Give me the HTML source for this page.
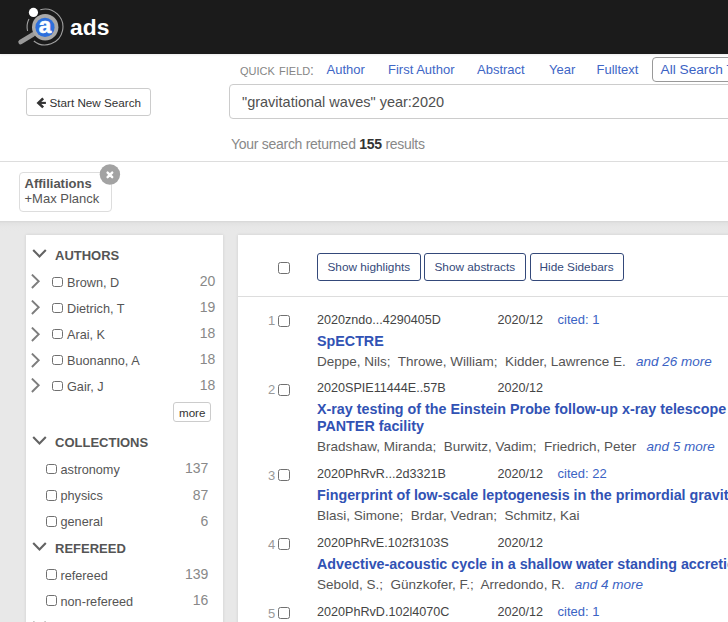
<!DOCTYPE html>
<html><head><meta charset="utf-8">
<style>
html,body{margin:0;padding:0;}
body{width:728px;height:622px;overflow:hidden;position:relative;background:#fff;font-family:"Liberation Sans",sans-serif;}
.t{position:absolute;white-space:nowrap;line-height:1;}
#hdr{position:absolute;left:0;top:0;width:728px;height:54px;background:#1b1b1b;box-shadow:0 1px 2px rgba(0,0,0,0.08);}
.qf{font-size:13px;color:#4066c6;}
#gray{position:absolute;left:0;top:221px;width:728px;height:401px;background:linear-gradient(#d6d6d6 0px,#e2e2e2 2px,#e7e7e7 6px,#e8e8e8 10px);}
.panel{position:absolute;background:#fff;box-shadow:0 0 3px rgba(0,0,0,0.12);}
.cb{position:absolute;box-sizing:border-box;border:1px solid #707070;border-radius:2.5px;background:#fff;}
.fh{font-size:13px;font-weight:bold;color:#555;}
.fi{font-size:12.7px;color:#555;}
.fc{font-size:14px;color:#888;text-align:right;}
.bib{font-size:12.6px;color:#444;}
.ttl{font-size:14.3px;font-weight:bold;color:#3152b4;}
.au{font-size:13.5px;color:#555;}
.more{font-size:13.5px;font-style:italic;color:#3b63c4;margin-left:2.5px;}
.cit{font-size:13px;color:#3b63c4;}
.num{font-size:13px;color:#999;}
.btn{position:absolute;box-sizing:border-box;border:1px solid #34497a;border-radius:3px;background:#fff;color:#34497a;font-size:12px;line-height:1;}
</style></head><body>
<div id="hdr">
  <svg width="64" height="53" style="position:absolute;left:0;top:0" viewBox="0 0 64 53">
    <path d="M 40.3 9.73 A 17.9 17.9 0 1 1 33.8 40.96" fill="none" stroke="#a0a0a0" stroke-width="1.1"/>
    <path d="M 28.94 19.1 A 17.9 17.9 0 0 0 27.55 31" fill="none" stroke="#a0a0a0" stroke-width="1.1"/>
    <line x1="20.6" y1="42" x2="33" y2="34.5" stroke="#999" stroke-width="4.6" stroke-linecap="round"/>
    <circle cx="45.2" cy="27.2" r="13.2" fill="#a9a9a9"/>
    <circle cx="45" cy="27.4" r="9.6" fill="#2d6fdc"/>
    <text x="45" y="32.9" text-anchor="middle" font-family="Liberation Sans" font-weight="bold" font-size="22.5" fill="#fff" stroke="#fff" stroke-width="0.6">a</text>
    <circle cx="33.45" cy="12.4" r="4.6" fill="#fff"/>
  </svg>
  <div class="t" style="left:69.8px;top:18px;font-size:21.5px;font-weight:bold;color:#fff;letter-spacing:0.1px;transform:scaleX(1.06);transform-origin:0 0">ads</div>
</div>

<!-- quick field row -->
<div class="t" style="left:240px;top:65.5px;font-size:11px;color:#858585;word-spacing:1.2px">QUICK FIELD</div>
<div class="t" style="left:310px;top:63.3px;font-size:14px;color:#858585;">:</div>
<div class="t qf" style="left:326.5px;top:62.6px">Author</div>
<div class="t qf" style="left:388px;top:62.6px">First Author</div>
<div class="t qf" style="left:477px;top:62.6px">Abstract</div>
<div class="t qf" style="left:549px;top:62.6px">Year</div>
<div class="t qf" style="left:596.5px;top:62.6px">Fulltext</div>
<div style="position:absolute;left:652px;top:57px;width:100px;height:25px;box-sizing:border-box;border:1px solid #999;border-radius:4px;"></div>
<div class="t" style="left:660.5px;top:62.9px;font-size:13.7px;color:#3b63c4">All Search Terms</div>

<!-- start new search -->
<div style="position:absolute;left:26px;top:88px;width:125px;height:28px;box-sizing:border-box;border:1px solid #ccc;border-radius:3px;"></div>
<svg style="position:absolute;left:34px;top:96px" width="14" height="14" viewBox="34 96 14 14"><path d="M45.9 102.9 H39" stroke="#333" stroke-width="2.1" fill="none"/><path d="M42.2 99.3 L38.4 102.9 L42.2 106.5" stroke="#333" stroke-width="2.6" fill="none" stroke-linecap="square"/></svg>
<div class="t" style="left:49.5px;top:97.3px;font-size:11.7px;color:#333">Start New Search</div>

<!-- search input -->
<div style="position:absolute;left:229px;top:84px;width:520px;height:35px;box-sizing:border-box;border:1px solid #ccc;border-radius:4px;"></div>
<div class="t" style="left:242px;top:94.6px;font-size:14.5px;color:#505050">"gravitational waves" year:2020</div>
<div class="t" style="left:231px;top:137px;font-size:14px;letter-spacing:-0.28px;color:#888">Your search returned <b style="color:#333">155</b> results</div>

<div style="position:absolute;left:0;top:161px;width:728px;height:1px;background:#ddd"></div>

<!-- affiliations -->
<div style="position:absolute;left:19px;top:172px;width:92.5px;height:39.5px;box-sizing:border-box;border:1px solid #ddd;border-radius:4px;"></div>
<div class="t" style="left:24.5px;top:177px;font-size:13px;font-weight:bold;color:#555">Affiliations</div>
<div class="t" style="left:24.5px;top:191.5px;font-size:13px;color:#555">+Max Planck</div>
<svg style="position:absolute;left:99px;top:164px" width="22" height="22" viewBox="0 0 22 22"><circle cx="10.9" cy="10.5" r="10.2" fill="#a3a3a3"/><path d="M8.6 8.6 L13.2 13.2 M13.2 8.6 L8.6 13.2" stroke="#fff" stroke-width="2.4" stroke-linecap="round"/></svg>

<div id="gray"></div>
<div class="panel" style="left:26px;top:235px;width:197px;height:400px;"></div>
<div class="panel" style="left:238px;top:235px;width:500px;height:400px;"></div>

<!-- facets -->
<svg style="position:absolute;left:31.5px;top:248.8px" width="16" height="10" viewBox="0 0 16 10"><path d="M1.2 0.9 L7.5 7.4 L13.8 0.9" fill="none" stroke="#636363" stroke-width="2.1"/></svg>
<div class="t fh" style="left:55px;top:249.0px">AUTHORS</div>
<svg style="position:absolute;left:30.5px;top:274.2px" width="10" height="16" viewBox="0 0 10 16"><path d="M0.9 0.6 L7.7 7.3 L0.9 14" fill="none" stroke="#7d7d7d" stroke-width="1.9"/></svg>
<div class="cb" style="left:52px;top:276.7px;width:11px;height:10.3px"></div>
<div class="t fi" style="left:67px;top:276.75px">Brown, D</div>
<div class="t fc" style="right:512.7px;top:274.05px">20</div>
<svg style="position:absolute;left:30.5px;top:300.2px" width="10" height="16" viewBox="0 0 10 16"><path d="M0.9 0.6 L7.7 7.3 L0.9 14" fill="none" stroke="#7d7d7d" stroke-width="1.9"/></svg>
<div class="cb" style="left:52px;top:302.7px;width:11px;height:10.3px"></div>
<div class="t fi" style="left:67px;top:302.75px">Dietrich, T</div>
<div class="t fc" style="right:512.7px;top:300.05px">19</div>
<svg style="position:absolute;left:30.5px;top:326.5px" width="10" height="16" viewBox="0 0 10 16"><path d="M0.9 0.6 L7.7 7.3 L0.9 14" fill="none" stroke="#7d7d7d" stroke-width="1.9"/></svg>
<div class="cb" style="left:52px;top:329px;width:11px;height:10.3px"></div>
<div class="t fi" style="left:67px;top:329.05px">Arai, K</div>
<div class="t fc" style="right:512.7px;top:326.35px">18</div>
<svg style="position:absolute;left:30.5px;top:352.5px" width="10" height="16" viewBox="0 0 10 16"><path d="M0.9 0.6 L7.7 7.3 L0.9 14" fill="none" stroke="#7d7d7d" stroke-width="1.9"/></svg>
<div class="cb" style="left:52px;top:355px;width:11px;height:10.3px"></div>
<div class="t fi" style="left:67px;top:355.05px">Buonanno, A</div>
<div class="t fc" style="right:512.7px;top:352.35px">18</div>
<svg style="position:absolute;left:30.5px;top:378.3px" width="10" height="16" viewBox="0 0 10 16"><path d="M0.9 0.6 L7.7 7.3 L0.9 14" fill="none" stroke="#7d7d7d" stroke-width="1.9"/></svg>
<div class="cb" style="left:52px;top:380.8px;width:11px;height:10.3px"></div>
<div class="t fi" style="left:67px;top:380.85px">Gair, J</div>
<div class="t fc" style="right:512.7px;top:378.15px">18</div>
<div style="position:absolute;left:173px;top:402px;width:38px;height:20px;box-sizing:border-box;border:1px solid #ccc;border-radius:3px;"></div>
<div class="t" style="left:179px;top:407.38px;font-size:11.6px;color:#333">more</div>
<svg style="position:absolute;left:31.5px;top:435.8px" width="16" height="10" viewBox="0 0 16 10"><path d="M1.2 0.9 L7.5 7.4 L13.8 0.9" fill="none" stroke="#636363" stroke-width="2.1"/></svg>
<div class="t fh" style="left:55px;top:436.2px">COLLECTIONS</div>
<div class="cb" style="left:46px;top:463.8px;width:11px;height:10.5px"></div>
<div class="t fi" style="left:60.5px;top:464.05px">astronomy</div>
<div class="t fc" style="right:519.7px;top:461.25px">137</div>
<div class="cb" style="left:46px;top:490.2px;width:11px;height:10.5px"></div>
<div class="t fi" style="left:60.5px;top:490.45px">physics</div>
<div class="t fc" style="right:519.7px;top:487.65px">87</div>
<div class="cb" style="left:46px;top:516.1999999999999px;width:11px;height:10.5px"></div>
<div class="t fi" style="left:60.5px;top:516.45px">general</div>
<div class="t fc" style="right:519.7px;top:513.65px">6</div>
<svg style="position:absolute;left:31.5px;top:542.2px" width="16" height="10" viewBox="0 0 16 10"><path d="M1.2 0.9 L7.5 7.4 L13.8 0.9" fill="none" stroke="#636363" stroke-width="2.1"/></svg>
<svg style="position:absolute;left:31.5px;top:621px" width="16" height="10" viewBox="0 0 16 10"><path d="M1.2 0.9 L7.5 7.4 L13.8 0.9" fill="none" stroke="#636363" stroke-width="2.1"/></svg>
<div class="t fh" style="left:55px;top:541.6px">REFEREED</div>
<div class="cb" style="left:46px;top:569.4px;width:11px;height:10.5px"></div>
<div class="t fi" style="left:60.5px;top:569.65px">refereed</div>
<div class="t fc" style="right:519.7px;top:566.85px">139</div>
<div class="cb" style="left:46px;top:595.3px;width:11px;height:10.5px"></div>
<div class="t fi" style="left:60.5px;top:595.55px">non-refereed</div>
<div class="t fc" style="right:519.7px;top:592.75px">16</div>
<!-- results -->
<div class="cb" style="left:278px;top:262px;width:12px;height:12px"></div>
<div class="btn" style="left:317px;top:253px;width:104px;height:28px"></div>
<div class="btn" style="left:424px;top:253px;width:101.5px;height:28px"></div>
<div class="btn" style="left:529.5px;top:253px;width:94px;height:28px"></div>
<div class="t" style="left:327.5px;top:262.11px;font-size:11.8px;color:#34497a">Show highlights</div>
<div class="t" style="left:434.5px;top:262.11px;font-size:11.8px;color:#34497a">Show abstracts</div>
<div class="t" style="left:539.5px;top:262.11px;font-size:11.8px;color:#34497a">Hide Sidebars</div>
<div style="position:absolute;left:238px;top:296px;width:490px;height:1px;background:#ddd"></div>
<div class="t num" style="left:268px;top:314.4px">1</div>
<div class="cb" style="left:278px;top:314.9px;width:12px;height:12px"></div>
<div class="t bib" style="left:317px;top:313.83px">2020zndo...4290405D</div>
<div class="t bib" style="left:497.5px;top:313.83px">2020/12</div>
<div class="t cit" style="left:557.5px;top:312.9px">cited: 1</div>
<div class="t ttl" style="left:317px;top:333.6px">SpECTRE</div>
<div class="t au" style="left:317px;top:354.77px">Deppe, Nils;&nbsp; Throwe, William;&nbsp; Kidder, Lawrence E.&nbsp; <span class=more>and 26 more</span></div>
<div class="t num" style="left:268px;top:383.0px">2</div>
<div class="cb" style="left:278px;top:383.5px;width:12px;height:12px"></div>
<div class="t bib" style="left:317px;top:382.43px">2020SPIE11444E..57B</div>
<div class="t bib" style="left:497.5px;top:382.43px">2020/12</div>
<div class="t ttl" style="left:317px;top:402.2px">X-ray testing of the Einstein Probe follow-up x-ray telescope</div>
<div class="t ttl" style="left:317px;top:419.2px">PANTER facility</div>
<div class="t au" style="left:317px;top:440.37px">Bradshaw, Miranda;&nbsp; Burwitz, Vadim;&nbsp; Friedrich, Peter&nbsp; <span class=more>and 5 more</span></div>
<div class="t num" style="left:268px;top:468.5px">3</div>
<div class="cb" style="left:278px;top:469.0px;width:12px;height:12px"></div>
<div class="t bib" style="left:317px;top:467.93px">2020PhRvR...2d3321B</div>
<div class="t bib" style="left:497.5px;top:467.93px">2020/12</div>
<div class="t cit" style="left:557.5px;top:467.0px">cited: 22</div>
<div class="t ttl" style="left:317px;top:487.7px">Fingerprint of low-scale leptogenesis in the primordial gravitational</div>
<div class="t au" style="left:317px;top:508.87px">Blasi, Simone;&nbsp; Brdar, Vedran;&nbsp; Schmitz, Kai</div>
<div class="t num" style="left:268px;top:537.5px">4</div>
<div class="cb" style="left:278px;top:538.0px;width:12px;height:12px"></div>
<div class="t bib" style="left:317px;top:536.93px">2020PhRvE.102f3103S</div>
<div class="t bib" style="left:497.5px;top:536.93px">2020/12</div>
<div class="t ttl" style="left:317px;top:556.7px">Advective-acoustic cycle in a shallow water standing accretion</div>
<div class="t au" style="left:317px;top:577.87px">Sebold, S.;&nbsp; Günzkofer, F.;&nbsp; Arredondo, R.&nbsp; <span class=more>and 4 more</span></div>
<div class="t num" style="left:268px;top:606.7px">5</div>
<div class="cb" style="left:278px;top:607.2px;width:12px;height:12px"></div>
<div class="t bib" style="left:317px;top:606.13px">2020PhRvD.102l4070C</div>
<div class="t bib" style="left:497.5px;top:606.13px">2020/12</div>
<div class="t cit" style="left:557.5px;top:605.2px">cited: 1</div>
</body></html>
